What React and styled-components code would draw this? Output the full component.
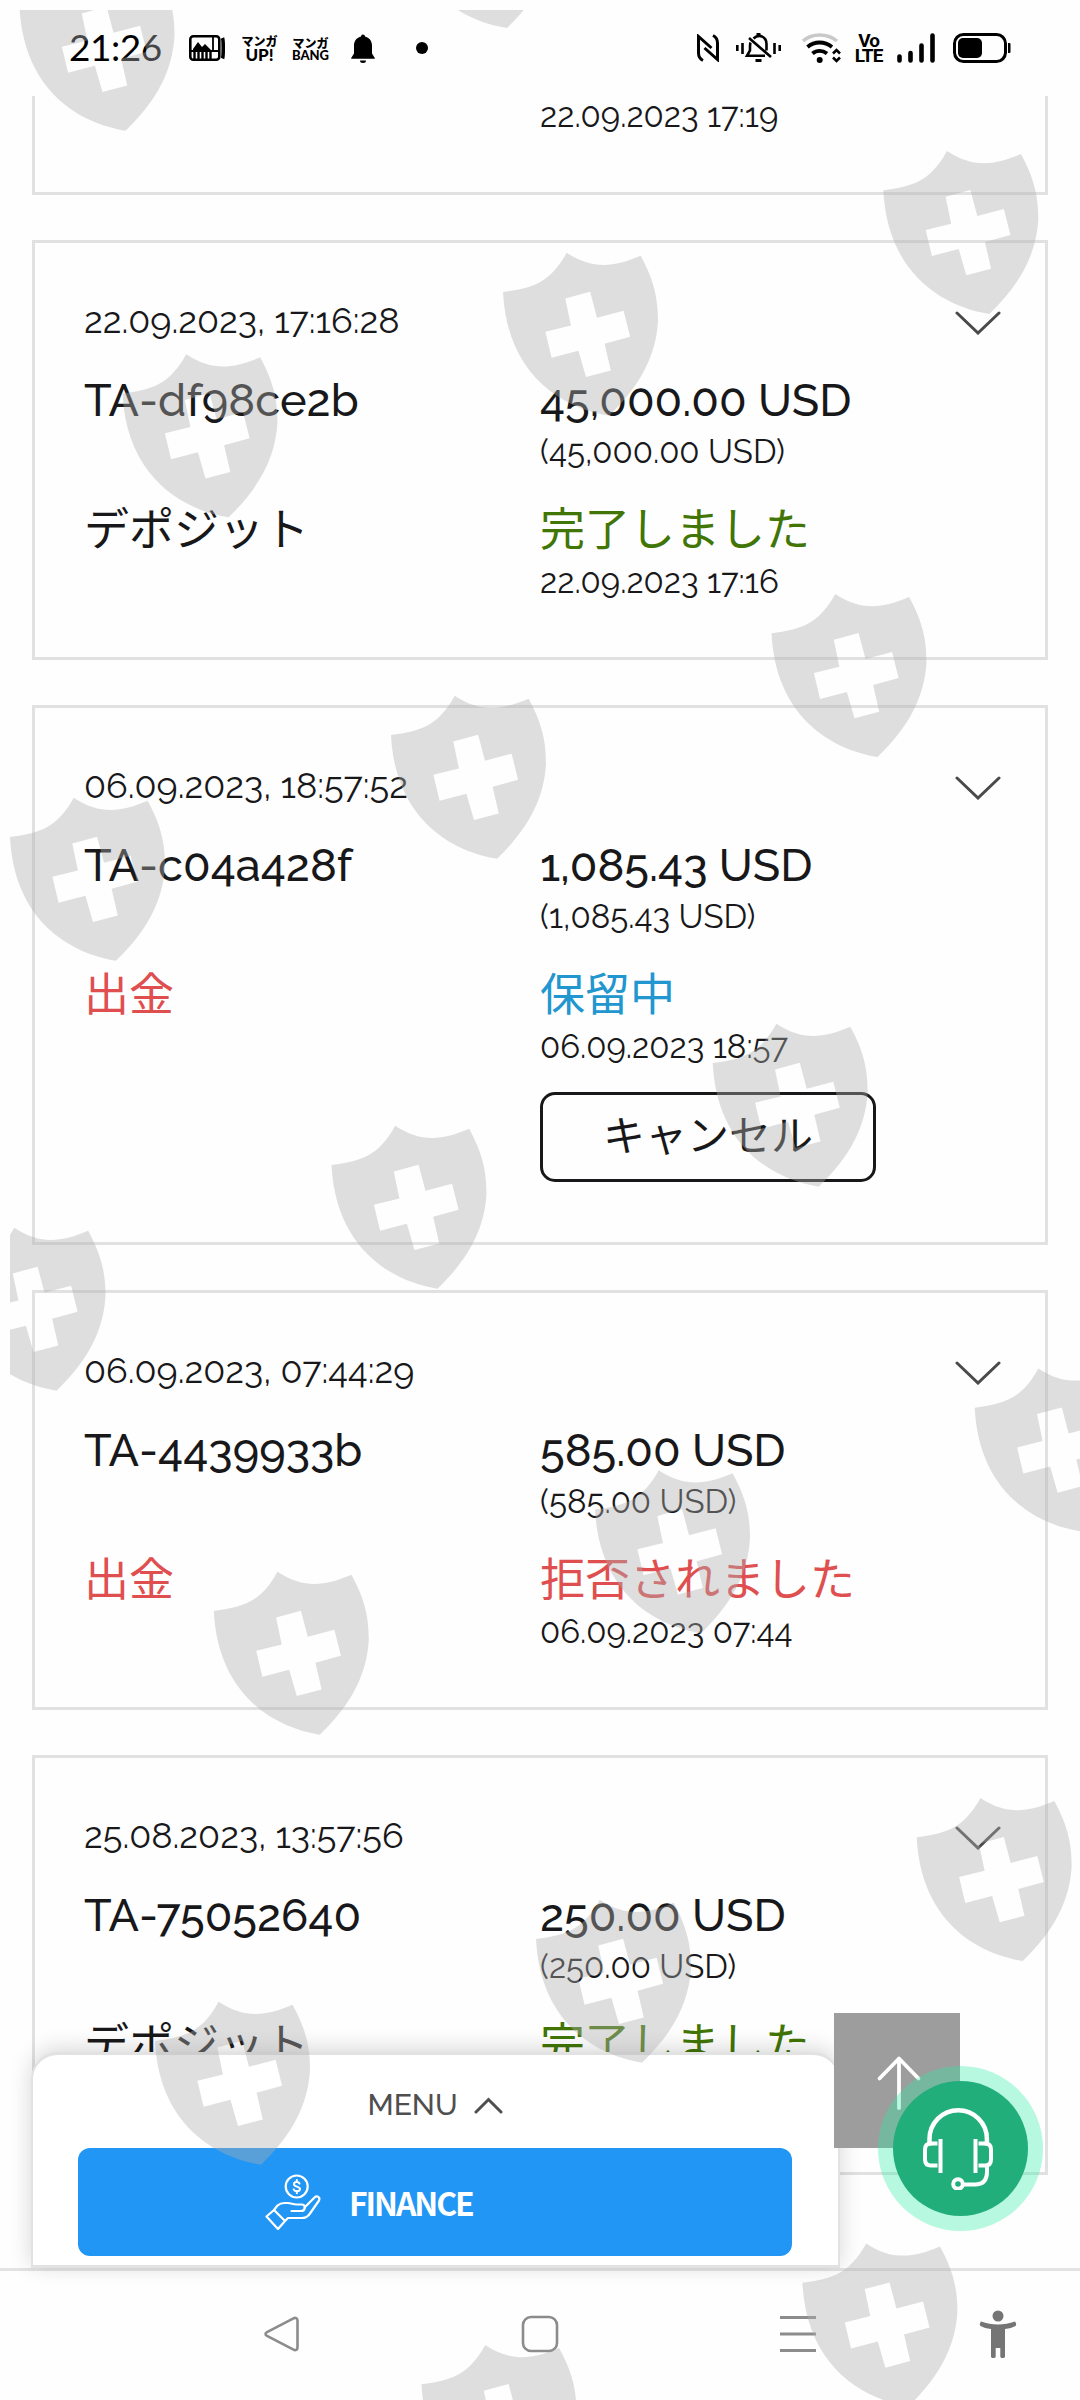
import React from 'react';
import styled, { createGlobalStyle } from 'styled-components';

const latin = 'Raleway, Lato, "Noto Sans CJK JP", sans-serif';
const japanese = '"Noto Sans CJK JP", "Noto Sans", sans-serif';

const GlobalStyle = createGlobalStyle`
  body { margin: 0; background: #fefefe; }
  * { box-sizing: border-box; }
  p { margin: 0; }
  svg { display: block; flex: none; }
`;

const Screen = styled.div`
  position: relative;
  display: flex;
  flex-direction: column;
  width: 1080px;
  height: 2400px;
  overflow: hidden;
  background: #fefefe;
  color: #18181a;
  font-family: ${latin};
`;

const StatusBar = styled.header`
  display: flex;
  align-items: center;
  justify-content: space-between;
  flex: none;
  height: 96px;
  padding: 0 69px;
  color: #000;
`;

const StatusGroup = styled.div`
  display: flex;
  align-items: center;
  gap: 17px;
`;

const StatusSlot = styled.div`
  margin-left: ${(p) => p.$left}px;
`;

const Clock = styled.time`
  width: 103px;
  padding-bottom: 2px;
  font: 400 37px/40px Lato, sans-serif;
  letter-spacing: -0.5px;
`;

const MangaBadge = styled.div`
  display: flex;
  flex-direction: column;
  align-items: center;
  width: 35px;
  font: 900 12px/13px "Noto Sans CJK JP", sans-serif;
  white-space: nowrap;
`;

const BadgeLatin = styled.span`
  font: ${(p) => (p.$big ? '900 17px/15px' : '900 13px/12px')} Lato, sans-serif;
`;

const VoLte = styled.div`
  display: flex;
  flex-direction: column;
  align-items: center;
  width: 23px;
  font: 700 19px/15px "Liberation Sans Narrow", Roboto, sans-serif;
  letter-spacing: -1px;
  white-space: nowrap;
`;

const Dot = styled.i`
  width: 12px;
  height: 12px;
  margin-left: 24px;
  border-radius: 50%;
  background: #000;
`;

const History = styled.main`
  display: flex;
  flex-direction: column;
  gap: 45px;
  flex: 1;
  min-height: 0;
  padding: 0 32px;
  overflow: hidden;
`;

const Card = styled.article`
  flex: none;
  padding: ${(p) => (p.$cut ? '0 44px 56px 49px' : '50px 44px 55.5px 49px')};
  border: 3px solid #e1e1e1;
  border-top-width: ${(p) => (p.$cut ? 0 : 3)}px;
`;

const CardHeader = styled.div`
  display: flex;
  justify-content: space-between;
  align-items: center;
  height: 54px;
  margin-bottom: 26.5px;

  svg { margin-top: 5px; }
`;

const CardRow = styled.div`
  display: grid;
  grid-template-columns: 456px 1fr;
  margin-bottom: ${(p) => p.$space || 0}px;
`;

const DateText = styled.time`
  font-size: 36px;
  line-height: 54px;
  white-space: nowrap;
`;

const Title = styled.p`
  font-size: 45px;
  font-weight: 500;
  line-height: 54px;
  white-space: nowrap;
`;

const Detail = styled.p`
  margin-top: ${(p) => p.$gap || 0}px;
  font-size: 33px;
  line-height: 40px;
  white-space: nowrap;
`;

const tones = { plain: '#18181a', green: '#417505', red: '#e04f50', blue: '#2196cf' };

const Label = styled.p`
  color: ${(p) => tones[p.$tone]};
  font: 400 45px/60px ${japanese};
  white-space: nowrap;
`;

const CancelButton = styled.button`
  display: block;
  width: 336px;
  height: 90px;
  margin: 25.5px 0 4.5px;
  padding: 0 0 8px;
  border: 3px solid #18181a;
  border-radius: 15px;
  background: transparent;
  color: #18181a;
  font: 400 42px/76px ${japanese};
`;

const Dock = styled.section`
  position: absolute;
  left: 31px;
  top: 2052px;
  width: 809px;
  height: 216px;
  padding: 34px 46px 0 45px;
  border: solid #e2e2e2;
  border-width: 3px 2px;
  border-radius: 27px 27px 0 0;
  background: #fff;
  box-shadow: 0 -3px 22px rgba(0, 0, 0, 0.16);
`;

const MenuToggle = styled.div`
  display: flex;
  align-items: center;
  justify-content: center;
  gap: 16px;
  height: 32px;
  margin-bottom: 27px;
  color: #4f4f4f;
  font-size: 30px;
  font-weight: 500;
  line-height: 32px;
`;

const FinanceButton = styled.div`
  display: flex;
  align-items: center;
  height: 108px;
  padding: 0 0 1px 187px;
  gap: 28px;
  border-radius: 12px;
  background: #2196f5;
  color: #fff;
  font: 700 32px/40px "Noto Sans CJK JP", sans-serif;
`;

const FinanceLabel = styled.span`
  letter-spacing: -2.1px;
`;

const ScrollTop = styled.div`
  position: absolute;
  left: 834px;
  top: 2013px;
  width: 126px;
  height: 135px;
  padding: 42px 0 0 42px;
  background: #9d9d9d;
`;

const SupportButton = styled.div`
  position: absolute;
  left: 878px;
  top: 2066px;
  width: 165px;
  height: 165px;
  display: grid;
  place-items: center;
  border-radius: 50%;
  background: rgba(38, 238, 165, 0.33);
`;

const SupportDisc = styled.div`
  width: 135px;
  height: 135px;
  display: grid;
  place-items: center;
  padding-right: 5px;
  border-radius: 50%;
  background: #21ae7a;
`;

const NavBar = styled.nav`
  display: flex;
  align-items: flex-start;
  flex: none;
  height: 132px;
  padding: 44px 63px 0 263px;
  border-top: 3px solid #e3e3e3;
`;

const NavItem = styled.div`
  display: flex;
  width: ${(p) => p.$width}px;
  margin-top: ${(p) => p.$up || 0}px;
`;

const Watermark = styled.svg`
  position: absolute;
  left: 10px;
  top: 10px;
  pointer-events: none;
`;

const PicturesIcon = () => (
  <svg width="36" height="26" viewBox="0 0 36 26" fill="none" stroke="#000" strokeWidth="2.6">
    <rect x="1.3" y="1.3" width="29" height="23.4" rx="3" />
    <path d="M24 1v16M2 16h28" strokeWidth="1.8" />
    <path d="M4 14l5-7 4 5 3-3 6 6H4z" fill="#000" strokeWidth="0" />
    <path d="M5.500 16v8M9.500 16v8M13.500 16v8M17.500 16v8M21.500 16v8" strokeWidth="2.4" />
    <path d="M33.500 3c1 2 1 18 0 20.500" strokeWidth="3.6" />
  </svg>
);

const BellIcon = () => (
  <svg width="24" height="29" viewBox="0 0 24 29">
    <path d="M10 2.500a2 2 0 0 1 4 0c4 1 7 4 7 9v8l2.800 4.500v.8H.2V24L3 19.500v-8c0-5 3-8 7-9zM9 26.500h6a3 2.500 0 0 1-6 0z" />
  </svg>
);

const NfcIcon = () => (
  <svg width="22" height="28" viewBox="0 0 22 28" fill="none" stroke="#000" strokeWidth="3">
    <path d="M6 26.500C3 25 1.500 23 1.500 19V2.500L14.500 14M16 1.500c3 1.500 4.500 3.500 4.500 7.500v16.500L7.500 14" />
  </svg>
);

const MutedBellIcon = () => (
  <svg width="45" height="30" viewBox="0 0 45 30" fill="none" stroke="#000" strokeWidth="2.6">
    <path d="M1.300 12v6M6.500 10v11M38.500 10v11M43.700 12v6" />
    <path d="M17.500 5.500c6-5.500 13-1.500 13 5.500v6.500M14.500 9.500c-.6 1.500-.5 4-.5 8l-3 5.300h18M13 5l22 19" />
    <path d="M20.500 1.500h4M19.500 27.500h6" strokeWidth="3" />
  </svg>
);

const WifiIcon = () => (
  <svg width="40" height="30" viewBox="0 0 40 30" fill="none" stroke="#000" strokeWidth="3.8">
    <path d="M1 8C10 0 25 0 35 8" stroke="#c9c9c9" strokeWidth="3.4" />
    <path d="M5.500 14c7-6 17-6 24.500 0M10.500 20.500c4-3.600 10-3.600 14.500 0" />
    <circle cx="17.700" cy="27" r="3" fill="#000" stroke="none" />
    <path d="M31 20.500l3.500-3.500 3.500 3.500M31 24.500l3.500 3.500 3.500-3.500" strokeWidth="2.6" />
  </svg>
);

const SignalIcon = () => (
  <svg width="38" height="30" viewBox="0 0 38 30" stroke="#000" strokeWidth="4.600" strokeLinecap="round">
    <path d="M2.500 23.500v4M13.500 20v7.500M24.500 12.500v15M35.500 2.500v25" />
  </svg>
);

const BatteryIcon = () => (
  <svg width="58" height="30" viewBox="0 0 58 30">
    <rect x="1.500" y="1.500" width="51" height="27" rx="9" fill="none" stroke="#000" strokeWidth="3" />
    <rect x="5" y="5" width="24" height="20" rx="5" />
    <path d="M55 10h1.500q1 0 1 1v8q0 1-1 1H55z" />
  </svg>
);

const ChevronDown = () => (
  <svg width="46" height="24" viewBox="0 0 46 24" fill="none" stroke="#4a4a4a" strokeWidth="3" strokeLinecap="round">
    <path d="M2 2l21 20L44 2" />
  </svg>
);

const ChevronUp = () => (
  <svg width="29" height="17" viewBox="0 0 29 17" fill="none" stroke="#4f4f4f" strokeWidth="3" strokeLinecap="round">
    <path d="M2 15L14.500 2.500 27 15" />
  </svg>
);

const HandCoinIcon = () => (
  <svg width="56" height="56" viewBox="0 0 56 56" fill="none" stroke="#fff" strokeWidth="2.200" strokeLinejoin="round" strokeLinecap="round">
    <circle cx="31.700" cy="12.500" r="11" />
    <path d="M34.500 9.500c-1-2-5.500-2-5.500.7 0 3 6 1.800 6 4.800 0 2.800-5 2.800-6.300.4M31.800 6v2M31.800 17v2.200" strokeWidth="2" />
    <path d="M1.500 42.500l7.500-6.500 11 11-7 8zM9 36l3.500-4.500c2-1.800 4-2.500 7-2.500h3c4 0 5 1.500 9 1.500h5c5 0 4 6.500-.5 6.500H26.500M39.500 33.500l10-10c2.500-2.500 6 0 4.500 3L45 39.500c-2.500 3.500-4 4.500-8 4.500H23l-3 3" />
  </svg>
);

const ArrowUp = () => (
  <svg width="46" height="56" viewBox="0 0 46 56" fill="none" stroke="#fff" strokeWidth="3.800" strokeLinecap="round" strokeLinejoin="round">
    <path d="M23 53V4M3.500 23.500L23 3.500l19.500 20" />
  </svg>
);

const HeadsetIcon = () => (
  <svg width="72" height="82" viewBox="0 0 72 82" fill="none" stroke="#fff" strokeWidth="4">
    <path d="M7.500 37.500V31a28.700 28.700 0 0 1 57.400 0v6.500" strokeWidth="4.500" />
    <path d="M18.500 31v34M15.500 35.500H9q-6 0-6 6v10q0 6 6 6h6.500M53.500 31v34M56.500 35.500H63q6 0 6 6v10q0 6-6 6h-6.500" />
    <path d="M65 57.500v6q0 13-12 13H42" />
    <circle cx="36" cy="76" r="4.800" />
  </svg>
);

const BackIcon = () => (
  <svg width="38" height="38" viewBox="0 0 38 38" fill="none" stroke="#8c8c8c" strokeWidth="2.600" strokeLinejoin="round">
    <path d="M4 17.200L30.500 3.300c2-1 4 0 4 2.200v27c0 2.200-2 3.200-4 2.200L4 20.800c-2-1-2-2.600 0-3.600z" />
  </svg>
);

const HomeIcon = () => (
  <svg width="38" height="38" viewBox="0 0 38 38" fill="none" stroke="#8c8c8c" strokeWidth="2.600">
    <rect x="2" y="2" width="34" height="34" rx="8" />
  </svg>
);

const RecentsIcon = () => (
  <svg width="38" height="38" viewBox="0 0 38 38" fill="none" stroke="#8c8c8c" strokeWidth="3">
    <path d="M1 2.500h36M1 19h36M1 35.500h36" />
  </svg>
);

const AccessibilityIcon = () => (
  <svg width="38" height="50" viewBox="0 0 38 50" fill="#757575">
    <circle cx="19" cy="6" r="5.500" />
    <path d="M2 11.500c11 4 23 4 34 0 1.500 2 1.500 3.500.5 4.500-3 1.500-6 2.500-10.500 3v27.500c0 2-4.700 2-4.700 0V38h-4.600v8.500c0 2-4.700 2-4.700 0V19c-4.500-.5-7.500-1.500-10.500-3-1-1-1-2.500.5-4.500z" />
  </svg>
);

const SHIELD =
  'M0 0C30 -4 47 -9 63.700 -39.300C90 -22 111 -25 137.600 -36.300C152 -10 155 8 155 29C153 63 138 93 106 123.700C58 116 4 82 0 0Z' +
  'M62.300 6.400L87.100 -.3L94 25.700L120.600 18.700L127.100 44.700L101.600 51.700L107.800 78.400L83 85L75.400 58.700L48.600 65.700L42.400 39.700L67.900 33.400Z';

const shields = [
  [19.5, 7], [400.9, -95.7],
  [883.3, 190.3], [503, 292], [122.5, 393.6],
  [771.5, 633.3], [391, 735], [10, 837],
  [712.7, 1063], [331.5, 1165], [-49.5, 1267],
  [974.7, 1407.7], [595, 1509.5], [213.8, 1611],
  [916.7, 1837.3], [536, 1939], [155, 2041],
  [802.4, 2282.7], [421.5, 2384.3],
];

const transactions = [
  { date: '22.09.2023, 17:16:28', id: 'TA-df98ce2b', amount: '45,000.00 USD', type: 'デポジット', typeTone: 'plain', status: '完了しました', statusTone: 'green', updated: '22.09.2023 17:16' },
  { date: '06.09.2023, 18:57:52', id: 'TA-c04a428f', amount: '1,085.43 USD', type: '出金', typeTone: 'red', status: '保留中', statusTone: 'blue', updated: '06.09.2023 18:57', cancellable: true },
  { date: '06.09.2023, 07:44:29', id: 'TA-4439933b', amount: '585.00 USD', type: '出金', typeTone: 'red', status: '拒否されました', statusTone: 'red', updated: '06.09.2023 07:44' },
  { date: '25.08.2023, 13:57:56', id: 'TA-75052640', amount: '250.00 USD', type: 'デポジット', typeTone: 'plain', status: '完了しました', statusTone: 'green' },
];

function Transaction({ item }) {
  return (
    <Card>
      <CardHeader>
        <DateText>{item.date}</DateText>
        <ChevronDown />
      </CardHeader>
      <CardRow $space={25}>
        <Title>{item.id}</Title>
        <div>
          <Title>{item.amount}</Title>
          <Detail $gap={4}>({item.amount})</Detail>
        </div>
      </CardRow>
      <CardRow>
        <Label $tone={item.typeTone}>{item.type}</Label>
        <div>
          <Label $tone={item.statusTone}>{item.status}</Label>
          <Detail $gap={5}>{item.updated || '\u00a0'}</Detail>
          {item.cancellable && <CancelButton>キャンセル</CancelButton>}
        </div>
      </CardRow>
    </Card>
  );
}

export default function App() {
  return (
    <Screen>
      <GlobalStyle />
      <StatusBar>
        <StatusGroup>
          <Clock>21:26</Clock>
          <PicturesIcon />
          <MangaBadge>マンガ<BadgeLatin $big>UP!</BadgeLatin></MangaBadge>
          <StatusSlot $left={-1}><MangaBadge>マンガ<BadgeLatin>BANG</BadgeLatin></MangaBadge></StatusSlot>
          <StatusSlot $left={6}><BellIcon /></StatusSlot>
          <Dot />
        </StatusGroup>
        <StatusGroup>
          <NfcIcon />
          <MutedBellIcon />
          <StatusSlot $left={4}><WifiIcon /></StatusSlot>
          <StatusSlot $left={-2}><VoLte><span>Vo</span><span>LTE</span></VoLte></StatusSlot>
          <SignalIcon />
          <StatusSlot $left={1}><BatteryIcon /></StatusSlot>
        </StatusGroup>
      </StatusBar>
      <History>
        <Card $cut>
          <CardRow>
            <span />
            <Detail>22.09.2023 17:19</Detail>
          </CardRow>
        </Card>
        {transactions.map((item) => <Transaction key={item.date} item={item} />)}
      </History>
      <NavBar>
        <NavItem $width={258}><BackIcon /></NavItem>
        <NavItem $width={258}><HomeIcon /></NavItem>
        <NavItem $width={200}><RecentsIcon /></NavItem>
        <NavItem $width={38} $up={-5}><AccessibilityIcon /></NavItem>
      </NavBar>
      <Dock>
        <MenuToggle><span>MENU</span><ChevronUp /></MenuToggle>
        <FinanceButton><HandCoinIcon /><FinanceLabel>FINANCE</FinanceLabel></FinanceButton>
      </Dock>
      <ScrollTop><ArrowUp /></ScrollTop>
      <SupportButton><SupportDisc><HeadsetIcon /></SupportDisc></SupportButton>
      <Watermark width="1070" height="2390" viewBox="10 10 1070 2390" fill="#b0b0b0" fillOpacity="0.4">
        {shields.map(([x, y]) => <path key={`${x},${y}`} d={SHIELD} fillRule="evenodd" transform={`translate(${x} ${y})`} />)}
      </Watermark>
    </Screen>
  );
}
